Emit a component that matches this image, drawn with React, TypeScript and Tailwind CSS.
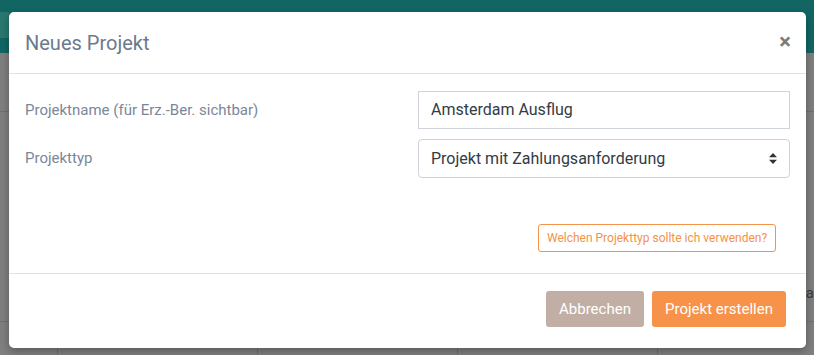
import React from "react";

export default function App() {
  const font = { fontFamily: "Roboto, 'Noto Sans', sans-serif" };
  return (
    <div className="relative w-[814px] h-[355px] overflow-hidden bg-[#7f7f7f]" style={font}>
      {/* dimmed page behind */}
      <div className="flex flex-col h-full">
        <div className="h-[53px] bg-[#116664] flex flex-col">
          <div className="h-[12px]" />
          <div className="h-[26px] w-[9px] bg-[#2a7770]" />
        </div>
        <div className="h-[59px] border-b border-[#6f6f6f]" />
        <div className="h-[210px] border-b border-[#6f6f6f]" />
        <div className="flex flex-1">
          <div className="w-[58px] border-r border-[#6f6f6f]" />
          <div className="w-[200px] border-r border-[#6f6f6f]" />
          <div className="w-[200px] border-r border-[#6f6f6f]" />
          <div className="w-[200px] border-r border-[#6f6f6f]" />
          <div className="flex-1" />
        </div>
      </div>
      <div className="absolute right-0 top-[282px] text-[15px] text-[#3a3a3a]">ra</div>

      {/* modal */}
      <div className="absolute left-[9px] top-[12px] w-[797px] h-[336px] bg-white rounded-[5px] shadow-[0_3px_9px_rgba(0,0,0,0.3)] flex flex-col">
        <div className="h-[62px] border-b border-[#dee2e6] flex items-center justify-between pl-[16px] pr-[16px]">
          <h4 className="text-[20px] text-[#6b7a8c] leading-none pt-[1px]">Neues Projekt</h4>
          <span className="text-[22px] font-bold text-[#7b7b7b] leading-none mr-[-1px] mt-[-2px]">×</span>
        </div>
        <div className="flex-1 px-[16px] pt-[17px] flex flex-col">
          <div className="flex items-center h-[38px]">
            <label className="flex-1 text-[15px] text-[#7a8799]">Projektname (für Erz.-Ber. sichtbar)</label>
            <div className="w-[372px] h-[38px] border border-[#ced4da] flex items-center px-[12px] text-[16px] text-[#333b44]">
              Amsterdam Ausflug
            </div>
          </div>
          <div className="flex items-center h-[39px] mt-[10px]">
            <label className="flex-1 text-[15px] text-[#7a8799]">Projekttyp</label>
            <div className="w-[372px] h-[39px] border border-[#ced4da] rounded-[4px] flex items-center justify-between pl-[12px] pr-[12px] text-[16px] text-[#333b44]">
              <span>Projekt mit Zahlungsanforderung</span>
              <svg width="8" height="11" viewBox="0 0 8 11">
                <path d="M4 0 L8 4.2 L0 4.2 Z" fill="#333" />
                <path d="M4 11 L8 6.8 L0 6.8 Z" fill="#333" />
              </svg>
            </div>
          </div>
          <div className="flex justify-end mt-[46px] pr-[14px]">
            <button className="h-[28px] w-[238px] border border-[#f4924a] rounded-[3px] text-[12px] text-[#f4924a] flex items-center justify-center">
              Welchen Projekttyp sollte ich verwenden?
            </button>
          </div>
        </div>
        <div className="h-[75px] border-t border-[#dee2e6] flex items-start justify-end pr-[20px] pt-[17px] gap-[8px]">
          <button className="h-[36px] w-[98px] bg-[#c1afa5] rounded-[3px] text-white text-[15px]">Abbrechen</button>
          <button className="h-[36px] w-[134px] bg-[#f7924a] rounded-[3px] text-white text-[15px]">Projekt erstellen</button>
        </div>
      </div>
    </div>
  );
}
